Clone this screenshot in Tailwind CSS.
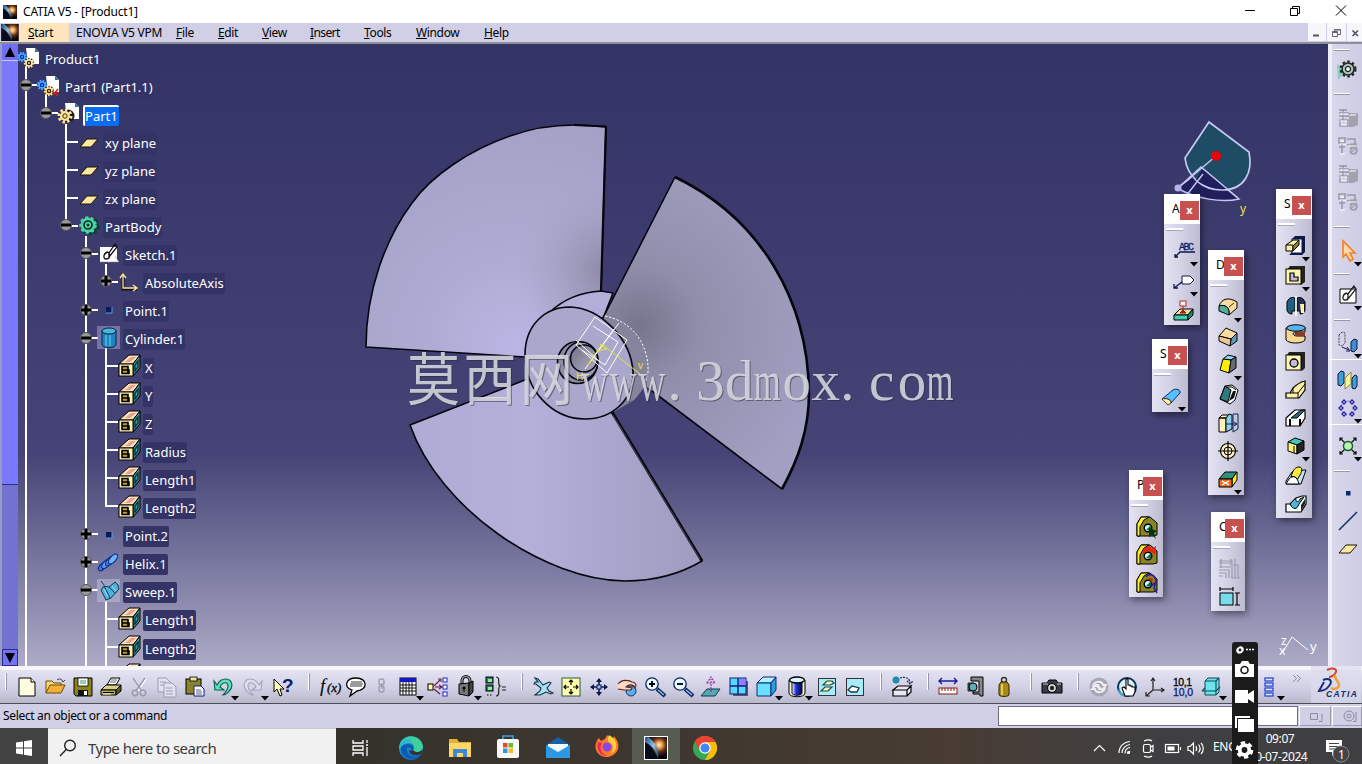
<!DOCTYPE html>
<html lang="en">
<head>
    <meta charset="UTF-8">
    <meta name="viewport" content="width=device-width, initial-scale=1.0">
    <title>CATIA V5 - [Product1]</title>
    <script src="https://cdn.jsdelivr.net/npm/@tailwindcss/browser@4"></script>
</head>
<body class="w-[1362px] h-[764px] overflow-hidden flex flex-col bg-[#d0cfe6] text-black font-['Noto_Sans','Open_Sans',sans-serif]">

    <!-- Icon library, every symbol is centred on 0,0 -->
    <svg class="absolute w-0 h-0">
        <defs>
            <radialGradient id="nebula" gradientUnits="userSpaceOnUse" cx="4" cy="-4" r="15">
                <stop offset="0" stop-color="#fff3d8"/><stop offset="0.25" stop-color="#f0a050"/><stop offset="0.6" stop-color="#5a2a14"/><stop offset="1" stop-color="#05060c"/>
            </radialGradient>
            <linearGradient id="streak" x1="0" y1="0" x2="1" y2="1">
                <stop offset="0" stop-color="#1c4a78"/><stop offset="0.5" stop-color="#8fc4e8"/><stop offset="1" stop-color="#10283c"/>
            </linearGradient>
            <linearGradient id="edgeG" x1="0" y1="0" x2="1" y2="1">
                <stop offset="0" stop-color="#1fb6e8"/><stop offset="0.5" stop-color="#1b7fd0"/><stop offset="1" stop-color="#0b58a8"/>
            </linearGradient>
            <linearGradient id="cyl" x1="0" x2="1"><stop offset="0" stop-color="#fff"/><stop offset="0.4" stop-color="#2233dd"/><stop offset="1" stop-color="#04043a"/></linearGradient>
        </defs>
        <symbol id="app" viewBox="-14 -14 28 28"><rect x="-14" y="-14" width="28" height="28" fill="#05060c"/><rect x="-14" y="-14" width="28" height="28" fill="url(#nebula)"/><path d="M-14 -14H-9C-3 -8 1 -3 3 4C4 8 3 12 2 14C0 4 -4 -3 -14 -7z" fill="url(#streak)"/><path d="M-14 -7C-6 -3 -1 4 0 14H-14z" fill="#060c1c"/></symbol>
        <!-- tree icons -->
        <symbol id="gearS" viewBox="-6 -6 12 12"><circle r="4" fill="none" stroke="currentColor" stroke-width="2.4" stroke-dasharray="1.6 1.1"/><circle r="3" fill="none" stroke="currentColor" stroke-width="1.6"/><circle r="1" fill="currentColor"/></symbol>
        <symbol id="product" viewBox="-14 -14 28 28"><path d="M-3 -11H6L10 -7V5H-1z" fill="#fff"/><path d="M6 -11L10 -7H6z" fill="#2a7898"/><circle cx="-7" cy="-2" r="5" fill="#0c2c90"/><use href="#gearS" x="-13" y="-8" width="12" height="12" color="#4aa6ff"/><circle cx="0" cy="4" r="5" fill="#221a10"/><use href="#gearS" x="-6" y="-2" width="12" height="12" color="#ffe9b0"/></symbol>
        <symbol id="part" viewBox="-14 -14 28 28"><path d="M-3 -11H6L10 -7V5H-1z" fill="#fff"/><path d="M6 -11L10 -7H6z" fill="#2a7898"/><circle cx="-7" cy="-2" r="5" fill="#0c2c90"/><use href="#gearS" x="-13" y="-8" width="12" height="12" color="#4aa6ff"/><circle cx="0" cy="4" r="5" fill="#221a10"/><use href="#gearS" x="-6" y="-2" width="12" height="12" color="#ffe08a"/><path d="M3 4L9 9M9 2L4 8M7 6H10" stroke="#c82018" stroke-width="1.4"/></symbol>
        <symbol id="part2" viewBox="-14 -14 28 28"><path d="M-4 -12H6L10 -8V4H-2z" fill="#fff"/><path d="M6 -12L10 -8H6z" fill="#2a7898"/><circle cx="-1" cy="1" r="6.5" fill="#1c1814"/><circle cx="-4" cy="1" r="6" fill="none" stroke="#ffe59a" stroke-width="3" stroke-dasharray="2.4 2.2"/><circle cx="-4" cy="1" r="5" fill="#ffe59a"/><circle cx="-4" cy="1" r="2.2" fill="none" stroke="#3a2c08"/></symbol>
        <symbol id="plane" viewBox="-14 -14 28 28"><path d="M-9 4L-2 -4H9L2 4z" fill="#ffe9a0" stroke="#181408" stroke-width="1"/></symbol>
        <symbol id="body" viewBox="-14 -14 28 28"><circle cx="1" cy="-2" r="8" fill="#0b3d38" stroke="#0b3d38" stroke-width="3" stroke-dasharray="3 2.4"/><circle cx="-1" cy="-3" r="7.500" fill="#4fd0a0" stroke="#4fd0a0" stroke-width="2.6" stroke-dasharray="3 2.4"/><circle cx="-1" cy="-3" r="4" fill="none" stroke="#06302a" stroke-width="1.6"/><circle cx="-1" cy="-3" r="1.5" fill="#06302a"/></symbol>
        <symbol id="sketch" viewBox="-14 -14 28 28"><path d="M-9 -9H8V6H-9z" fill="#fff"/><path d="M-9 6H10L6 0" fill="#fff" stroke="#888" stroke-width=".6"/><path d="M-1 -4C-6 -3 -6 3 -3 3C1 3 2 -1 -1 -4M6 -12L0 -3V1L8 -9z" fill="none" stroke="#111" stroke-width="1.3"/></symbol>
        <symbol id="axis" viewBox="-14 -14 28 28"><path d="M-6 -9V5H8" fill="none" stroke="#111" stroke-width="3"/><path d="M-6 -10V4H8M-9 -6L-6 -10L-3 -6M4 1L8 4L4 7" fill="none" stroke="#ffe9a0" stroke-width="1.3"/></symbol>
        <symbol id="point" viewBox="-14 -14 28 28"><rect x="-3" y="-5" width="6" height="6" fill="#0a1a58"/><path d="M-3 1H3V-5" fill="none" stroke="#58a0e8" stroke-width="1"/></symbol>
        <symbol id="cylT" viewBox="-14 -14 28 28"><rect x="-12" y="-14" width="23" height="23" fill="#a9a7dc" opacity=".5"/><path d="M-7 -9V4C-7 9 7 9 7 4V-9z" fill="#1f83c0" stroke="#06283c"/><ellipse cy="-9" rx="7" ry="3" fill="#4ab8dc" stroke="#06283c"/><path d="M-3 -5V6M1 -5V6" stroke="#6fd6f2"/></symbol>
        <symbol id="param" viewBox="-14 -14 28 28"><path d="M-10 -4L0 -13H11L4 -4z" fill="#fbe0b8" stroke="#000"/><path d="M-4 -6L2 -11H7L1 -6z" fill="#e8a090"/><path d="M4 -4L11 -13V0L4 8z" fill="#3e8f96" stroke="#000"/><path d="M6 -3L9 -7V-1L6 3z" fill="none" stroke="#0a2a30" stroke-width="1.2"/><rect x="-10" y="-4" width="14" height="12" fill="#fff2b8" stroke="#000"/><path d="M-7 -1.500H-1V5.500H-7zM-7 2H0V5.500H-2" fill="#b89a48" stroke="#000" stroke-width="1.600"/></symbol>
        <symbol id="helix" viewBox="-14 -14 28 28"><g fill="#3a7ae8" stroke="#0c2a80" stroke-width="1.1"><ellipse cx="-7" cy="2" rx="2.600" ry="4.500" transform="rotate(40 -7 2)"/><ellipse cx="-3" cy="-1" rx="3" ry="5.500" transform="rotate(40 -3 -1)" fill="#5a9cf4"/><ellipse cx="1" cy="-4" rx="3" ry="6" transform="rotate(40 1 -4)"/><ellipse cx="4" cy="-6" rx="3" ry="6" transform="rotate(40 4 -6)" fill="#6fb2ff"/></g></symbol>
        <symbol id="sweep" viewBox="-14 -14 28 28"><rect x="-12" y="-14" width="23" height="23" fill="#b9b7d4" opacity=".6"/><path d="M-8 -3L-5 -7L0 -6L6 -11L9 -8L10 -4L2 5L-3 7z" fill="#4fb0dc" stroke="#0c3c58"/><path d="M-5 -7L1 5M0 -6L6 0M-8 -12L-5 -8" stroke="#0c3c58"/><path d="M-5 -4L-1 4M3 -7L7 -2" stroke="#a8e2f6"/></symbol>
        <!-- standard toolbar -->
        <symbol id="new" viewBox="-14 -14 28 28"><path d="M-8 -9H4L8 -5V9H-8z" fill="#fffde0" stroke="#000"/><path d="M4 -9V-5H8" fill="#fff" stroke="#000"/></symbol>
        <symbol id="open" viewBox="-14 -14 28 28"><path d="M-9 6V-6H-3L-1 -4H6V-1" fill="#ffd873" stroke="#6a4a08"/><path d="M-9 6L-5 -2H10L6 6z" fill="#f2b136" stroke="#6a4a08"/><path d="M2 -7C4 -9 7 -8 8 -5L10 -7" fill="none" stroke="#333"/></symbol>
        <symbol id="save" viewBox="-14 -14 28 28"><path d="M-9 -9H9V9H-7L-9 7z" fill="#8a8420" stroke="#000"/><rect x="-5" y="-9" width="10" height="8" fill="#fff" stroke="#000" stroke-width=".8"/><path d="M-3 -6H3M-3 -4H3" stroke="#3c9a6c"/><rect x="-5" y="3" width="10" height="6" fill="#111"/><rect x="1" y="4" width="3" height="4" fill="#fff"/></symbol>
        <symbol id="print" viewBox="-14 -14 28 28"><path d="M-4 -2L0 -9H9L5 -2z" fill="#fff" stroke="#000"/><path d="M-1 -5H5M0 -7H6" stroke="#333" stroke-width=".7"/><path d="M-10 3L-5 -2H10L5 3z" fill="#d9d18a" stroke="#000"/><path d="M-10 3H5V8H-10z" fill="#b8b060" stroke="#000"/><path d="M5 3L10 -2V4L5 8z" fill="#5c5820" stroke="#000"/><path d="M-8 5.500H3" stroke="#000"/><path d="M-8 7H0" stroke="#ffffa0"/></symbol>
        <symbol id="cut" viewBox="-14 -14 28 28"><g fill="none" stroke="#fff" stroke-width="1.6" transform="translate(1 1)"><path d="M-6 -9L3 4M6 -9L-3 4"/></g><g fill="none" stroke="#9c9ab0" stroke-width="1.5"><path d="M-6 -9L3 4M6 -9L-3 4"/><circle cx="-4" cy="6" r="2.7"/><circle cx="4" cy="6" r="2.7"/></g></symbol>
        <symbol id="copy" viewBox="-14 -14 28 28"><g fill="#e2e1f0" stroke="#9c9ab0"><path d="M-9 -9H-1L3 -5V5H-9z"/><path d="M-3 -4H5L9 0V10H-3z"/><path d="M-7 -5H-1M-7 -2H-4M-1 1H5M-1 4H6M-1 7H6"/></g></symbol>
        <symbol id="paste" viewBox="-14 -14 28 28"><rect x="-9" y="-8" width="15" height="15" fill="#8a8430" stroke="#000"/><rect x="-5" y="-10" width="7" height="4" fill="#e8e4a0" stroke="#000" stroke-width=".8"/><path d="M-1 -1H6L9 2V9H-1z" fill="#fff" stroke="#10206a"/><path d="M1 3H6M1 5H7M1 7H7" stroke="#10206a" stroke-width=".7"/></symbol>
        <symbol id="undo" viewBox="-14 -14 28 28"><path d="M-9 -6L-8 3H1L-3 0C-1 -5 5 -6 5 -1C5 3 3 5 0 8C3 8 9 3 9 -2C8 -10 -2 -10 -6 -2z" fill="#5fe0b8" stroke="#0a5a50" stroke-width="1.1"/></symbol>
        <symbol id="redo" viewBox="-14 -14 28 28"><path d="M9 -6L8 3H-1L3 0C1 -5 -5 -6 -5 -1C-5 3 -3 5 0 8C-3 8 -9 3 -9 -2C-8 -10 2 -10 6 -2z" fill="#dddcec" stroke="#a4a2b8" stroke-width="1.1"/></symbol>
        <symbol id="help" viewBox="-14 -14 28 28"><path d="M-9 -8V5L-6 2L-3 9L-1 8L-3 2H1z" fill="#ffffb8" stroke="#000"/><text x="-1" y="5" font-size="19" font-weight="bold" fill="#0c1c6c" font-family="Liberation Sans">?</text></symbol>
        <symbol id="fx" viewBox="-14 -14 28 28"><text x="-10" y="5" font-size="19" font-style="italic" font-family="Liberation Serif">f</text><text x="-3" y="5" font-size="13" font-style="italic" font-family="Liberation Serif" stroke="#000" stroke-width=".3">(x)</text></symbol>
        <symbol id="bubble" viewBox="-14 -14 28 28"><path d="M0 -9C12 -9 12 3 1 4L-6 9L-4 3C-13 0 -10 -9 0 -9z" fill="#fff" stroke="#000" stroke-width="1.3"/><path d="M-5 -5H6M-6 -3H7M-6 -1H6" stroke="#222" stroke-width=".9"/></symbol>
        <symbol id="chain" viewBox="-14 -14 28 28"><g fill="none" stroke="#a09eb4" stroke-width="1.4"><rect x="-3" y="-8" width="5" height="6" rx="2"/><rect x="-3" y="-1" width="5" height="6" rx="2"/><path d="M0 -4V2"/></g></symbol>
        <symbol id="table" viewBox="-14 -14 28 28"><rect x="-8" y="-9" width="16" height="17" fill="#fff" stroke="#000"/><rect x="-8" y="-9" width="16" height="4" fill="#1418c0"/><path d="M-5 -5V8M-2 -5V8M1 -5V8M4 -5V8M-8 -2H8M-8 1H8M-8 4H8" stroke="#000" stroke-width=".9"/></symbol>
        <symbol id="diagram" viewBox="-14 -14 28 28"><rect x="-10" y="-3" width="5" height="6" fill="#ffffa0" stroke="#000"/><path d="M-4 -1L2 -7M-3 0H4M-4 2L2 7M0 -8H3V-5M1 -2L4 0L1 2" fill="none" stroke="#701850" stroke-width="1.1"/><g fill="#fff" stroke="#1c28c8"><rect x="5" y="-9" width="4" height="4"/><rect x="5" y="-2" width="4" height="4"/><rect x="5" y="5" width="4" height="4"/></g></symbol>
        <symbol id="lock" viewBox="-14 -14 28 28"><path d="M-4 -2V-6C-4 -12 4 -12 4 -6V-2" fill="none" stroke="#000" stroke-width="3"/><path d="M-4 -2V-6C-4 -12 4 -12 4 -6V-2" fill="none" stroke="#aaa" stroke-width="1.2"/><path d="M-7 -3L3 -4V9L-7 7z" fill="#777" stroke="#000"/><path d="M3 -4L7 -6V5L3 9z" fill="#444" stroke="#000"/><circle cx="-2" cy="1" r="1.6"/><path d="M-2 1V5" stroke="#000"/></symbol>
        <symbol id="rules" viewBox="-14 -14 28 28"><rect x="-10" y="-10" width="7" height="6" fill="#2f7a80" stroke="#000"/><rect x="-8" y="-8" width="4" height="3" fill="#8ff08a"/><rect x="-10" y="-2" width="7" height="6" fill="#2f7a80" stroke="#000"/><rect x="-8" y="0" width="4" height="3" fill="#8ff08a"/><path d="M-9 8H-3" stroke="#000" stroke-dasharray="1.5 1.5"/><path d="M0 -10C5 -10 1 -2 4 -1C1 0 5 9 0 9M6 0H10M6 3H10" fill="none" stroke="#222" stroke-width="1.2"/></symbol>
        <!-- view toolbar -->
        <symbol id="fly" viewBox="-14 -14 28 28"><path d="M-8 -9L-5 -8L0 -2L6 -5L8 -4L4 1L6 4L10 6L8 7L3 5L-3 8L-8 8L-3 4L-2 1L-7 -3L-9 -3L-8 -5L-5 -5z" fill="#a8e0f0" stroke="#10304a" stroke-width="1.1"/></symbol>
        <symbol id="fit" viewBox="-14 -14 28 28"><rect x="-9" y="-9" width="18" height="18" fill="#ffffb0" stroke="#2a5a3a"/><path d="M0 -7V-2M0 7V2M-7 0H-2M7 0H2M-2 -5L0 -7L2 -5M-2 5L0 7L2 5M-5 -2L-7 0L-5 2M5 -2L7 0L5 2" fill="none" stroke="#000" stroke-width="1.2"/></symbol>
        <symbol id="pan" viewBox="-14 -14 28 28"><path d="M0 -8V8M-8 0H8" stroke="#0a1a50" stroke-width="1.600"/><path d="M-3 -5L0 -9L3 -5zM-3 5L0 9L3 5zM-5 -3L-9 0L-5 3zM5 -3L9 0L5 3z" fill="#0a1a50"/><rect x="-2" y="-2" width="4" height="4" fill="#9cc4f0" stroke="#0a1a50"/></symbol>
        <symbol id="rotate" viewBox="-14 -14 28 28"><circle cx="4" cy="4" r="5" fill="#58b0f0" stroke="#10306a"/><path d="M-9 -3C-5 -8 2 -7 5 -5C9 -5 10 -1 8 1L7 -1C4 -3 1 -2 -1 0L5 1L4 3H-3L-9 2" fill="#fbd8c8" stroke="#5a2418" stroke-width="1.1"/></symbol>
        <symbol id="zin" viewBox="-14 -14 28 28"><path d="M2 2L10 9" stroke="#10205a" stroke-width="4"/><path d="M3 3L9 8" stroke="#7ac8f0" stroke-width="1.6"/><circle cx="-3" cy="-3" r="6.2" fill="#e8fbff" stroke="#10205a" stroke-width="1.3"/><path d="M-6 -3H0M-3 -6V0" stroke="#000" stroke-width="1.8"/></symbol>
        <symbol id="zout" viewBox="-14 -14 28 28"><path d="M2 2L10 9" stroke="#10205a" stroke-width="4"/><path d="M3 3L9 8" stroke="#7ac8f0" stroke-width="1.6"/><circle cx="-3" cy="-3" r="6.2" fill="#e8fbff" stroke="#10205a" stroke-width="1.3"/><path d="M-6 -3H0" stroke="#000" stroke-width="1.8"/></symbol>
        <symbol id="normal" viewBox="-14 -14 28 28"><path d="M-10 9L-4 2H9L4 9z" fill="#58a8b4" stroke="#0c3a44"/><path d="M0 5V-8M-4 -4L0 -10L4 -4z" fill="none" stroke="#8a2a9a" stroke-width="1.1" stroke-dasharray="2 1"/></symbol>
        <symbol id="multi" viewBox="-14 -14 28 28"><rect x="-6" y="-6" width="15" height="15" fill="#555577"/><rect x="-9" y="-9" width="16" height="16" fill="#58d8ff" stroke="#0c1c78"/><rect x="0" y="-8" width="6.500" height="7" fill="#9a78ff"/><path d="M-1 -9V7M-9 -1H7" stroke="#0c1c78" stroke-width="1.4"/></symbol>
        <symbol id="cube" viewBox="-14 -14 28 28"><path d="M-10 -4L-4 -10H9L4 -4z" fill="#b4f2ff" stroke="#0c2878"/><path d="M-10 -4H4V9H-10z" fill="#6ae0ff" stroke="#0c2878"/><path d="M4 -4L9 -10V3L4 9z" fill="#2f9fdc" stroke="#0c2878"/></symbol>
        <symbol id="shade" viewBox="-14 -14 28 28"><path d="M-8 -7V6C-8 11 8 11 8 6V-7z" fill="#f6f6c8" stroke="#000"/><path d="M-5 -5V6C-5 9 5 9 5 6V-5z" fill="url(#cyl)" stroke="#04043a"/><ellipse cy="-7" rx="7.5" ry="3" fill="#d8f4ff" stroke="#000" stroke-width="1.3"/></symbol>
        <symbol id="hide" viewBox="-14 -14 28 28"><rect x="-8.500" y="-8.500" width="17" height="17" fill="#a8ecfa" stroke="#333"/><path d="M-6 4L-2 0H5L1 4zM-4 -2L0 -6H5L7 -4L3 -2z" fill="#fff2b8" stroke="#1a4a4a" stroke-width="1.2"/></symbol>
        <symbol id="swap" viewBox="-14 -14 28 28"><rect x="-8.500" y="-8.500" width="17" height="17" fill="#a8ecfa" stroke="#333"/><path d="M-7 3L-3 -1L4 1L2 5H-4z" fill="#fff" stroke="#1a3a4a" stroke-width="1.3"/></symbol>
        <symbol id="catalog" viewBox="-14 -14 28 28"><circle cx="-6" cy="-7" r="3.500" fill="#1f8bb0"/><path d="M-2 -9C4 -11 8 -8 8 -4M5 -6L8 -3L11 -6" fill="none" stroke="#10205a" stroke-width="1.2" stroke-dasharray="2 1"/><path d="M-9 3L-4 -1H9L5 3zM-9 3H5V9H-9zM5 3L9 -1V5L5 9" fill="#e8e8f4" stroke="#000" stroke-width="1.2"/></symbol>
        <symbol id="measure" viewBox="-14 -14 28 28"><path d="M-9 -6H9M-6 -9L-9 -6L-6 -3M6 -9L9 -6L6 -3" fill="none" stroke="#141ca0" stroke-width="1.4"/><rect x="-9" y="1" width="18" height="6" fill="#fff" stroke="#8a1a10"/><path d="M-6 1V4M-3 1V4M0 1V4M3 1V4M6 1V4" stroke="#8a1a10"/></symbol>
        <symbol id="caliper" viewBox="-14 -14 28 28"><path d="M-5 -10H7V9H4V7H-3V5H3V-6H-5z" fill="#888" stroke="#000"/><path d="M-8 -4H-2V4H-8z" fill="#666" stroke="#000" stroke-width=".8"/><circle cx="-3" cy="0" r="4" fill="#5ab0b8" stroke="#000"/></symbol>
        <symbol id="weight" viewBox="-14 -14 28 28"><circle cy="-7" r="2.500" fill="none" stroke="#333" stroke-width="1.4"/><path d="M-3 -5H3L5 -2V8C3 10 -3 10 -5 8V-2z" fill="#a88a1c" stroke="#2c2404"/><path d="M-2 -3V8" stroke="#f0dc70" stroke-width="1.6"/></symbol>
        <symbol id="camera" viewBox="-14 -14 28 28"><path d="M-10 -4H-5L-3 -7H4L6 -4H10V6H-10z" fill="#3a3a48" stroke="#000"/><path d="M-9 -3H-4M5 -3H9" stroke="#ccc"/><circle cy="1" r="4.400" fill="#ddd" stroke="#000"/><circle cy="1" r="2.200" fill="#222"/></symbol>
        <symbol id="update" viewBox="-14 -14 28 28"><circle r="9.500" fill="#a9a7b4"/><path d="M-6 0C-6 -6 3 -7 4 -2H7L3 3L-2 -2H0M6 0C6 6 -3 7 -4 2H-7L-3 -2L1 2H-1" fill="none" stroke="#eeedf6" stroke-width="1.800"/></symbol>
        <symbol id="manual" viewBox="-14 -14 28 28"><circle r="9" fill="#d8eef8" stroke="#0c3050" stroke-width="2"/><path d="M-9 3C-6 8 -3 9 0 9" fill="none" stroke="#3ab0d8" stroke-width="1.500"/><path d="M-2 9L-5 1L-3 0L-1 2V-8H1V-2H3V-1H5V0H8V5L6 9z" fill="#fff" stroke="#000" stroke-width="1.100"/></symbol>
        <symbol id="axsys" viewBox="-14 -14 28 28"><path d="M-2 -9V3H9M-2 3L-9 9M-4 -6L-2 -9L0 -6M6 1L9 3L6 5M-9 5V9H-5" fill="none" stroke="#222" stroke-width="1.200"/></symbol>
        <symbol id="dims" viewBox="-14 -14 28 28"><g font-size="10.500" font-family="Liberation Sans" stroke-width=".3"><text x="-10" y="-1" textLength="19" stroke="#000">10,1</text><text x="-10" y="9" textLength="20" fill="#0c1c78" stroke="#0c1c78">10,0</text></g></symbol>
        <symbol id="box" viewBox="-14 -14 28 28"><path d="M-6 -6L-3 -9H8V5L5 8H-6z" fill="#6fe4ec" stroke="#0c4a58"/><path d="M-6 -6H5V8M5 -6L8 -9M-9 4H5L9 0M-9 4L-6 1" fill="none" stroke="#0c4a58" stroke-width="1.100"/></symbol>
        <symbol id="stack" viewBox="-14 -14 28 28"><g fill="#e4e8ff" stroke="#1c3ccc" stroke-width="1.200"><rect x="-4" y="-9" width="8" height="3"/><rect x="-4" y="-4" width="8" height="3"/><rect x="-4" y="1" width="8" height="3"/><rect x="-4" y="6" width="8" height="3"/></g></symbol>
        <!-- floating toolbars -->
        <symbol id="abc" viewBox="-14 -14 28 28"><text x="-5" y="-1" font-size="10" fill="#0c1c6c" textLength="15" font-family="Liberation Mono" stroke="#0c1c6c" stroke-width=".3">ABC</text><path d="M11 1H-4L-9 6M-9 3V6H-6" fill="none" stroke="#0c1440" stroke-width="1.300"/></symbol>
        <symbol id="tag" viewBox="-14 -14 28 28"><path d="M-2 -5H6L10 -1L6 3H-2z" fill="#fff" stroke="#101850"/><path d="M-2 1L-10 7M-10 3V7H-6" fill="none" stroke="#101850" stroke-width="1.300"/></symbol>
        <symbol id="stamp" viewBox="-14 -14 28 28"><path d="M-10 4L-4 -2H9L4 4z" fill="#f8dc9c" stroke="#000"/><path d="M-10 4H4V9H-10z" fill="#3ed0b0" stroke="#000"/><path d="M4 4L9 -2V4L4 9z" fill="#1c8a80" stroke="#000"/><path d="M-1 -5V0M-4 2L-1 -1L2 2z" fill="#a02018" stroke="#a02018"/><rect x="-4" y="-10" width="6" height="5" fill="#fff" stroke="#c02018"/></symbol>
        <symbol id="surf" viewBox="-14 -14 28 28"><path d="M-10 3L1 -6C4 -8 9 -6 8 -3L-1 7C-1 3 -6 2 -10 3z" fill="#58c0ff" stroke="#0c2878"/><path d="M-10 3C-6 2 -1 3 -1 7L-4 9C-6 6 -8 6 -10 3z" fill="#fff0b8" stroke="#4a3a10"/></symbol>
        <symbol id="fillet" viewBox="-14 -14 28 28"><path d="M-9 -1C-6 -9 1 -10 9 -5V1L1 8C2 0 -4 -3 -9 -1z" fill="#f8dca0" stroke="#000"/><path d="M-9 -1C-3 -3 2 0 1 8L-9 4z" fill="#4fae9a" stroke="#000"/><path d="M1 0L6 -4" stroke="#000" stroke-width=".8"/></symbol>
        <symbol id="chamfer" viewBox="-14 -14 28 28"><path d="M-9 -1L-2 -9L9 -4L3 2z" fill="#f8dca0" stroke="#000"/><path d="M3 2L9 -4V4L2 9z" fill="#5a9cc0" stroke="#000"/><path d="M-9 -1L3 2L2 9L-9 4z" fill="#e8c890" stroke="#000"/></symbol>
        <symbol id="draft" viewBox="-14 -14 28 28"><path d="M-5 -6L0 -10L8 -8L3 -5z" fill="#80d8f4" stroke="#000"/><path d="M-5 -6L3 -5L1 8L-8 5z" fill="#fff000" stroke="#000"/><path d="M3 -5L8 -8V3L1 8z" fill="#6a6a70" stroke="#000"/></symbol>
        <symbol id="shell" viewBox="-14 -14 28 28"><path d="M-8 4L-3 -9L4 -10L10 -5L7 5L2 9z" fill="#fff" stroke="#000"/><path d="M-8 4L-3 -9L3 -5L0 7z" fill="#2f7a7a" stroke="#000"/><path d="M1 6L5 -4L8 -4L6 3z" fill="#111"/><path d="M-2 -8L4 -8L8 -5" fill="none" stroke="#000"/></symbol>
        <symbol id="thick" viewBox="-14 -14 28 28"><path d="M-9 -5L-6 -8H1L-2 -5zM-9 -5H-2V9H-9z" fill="#fff2b8" stroke="#000"/><path d="M-2 -5L1 -9L4 -8V6L-2 9z" fill="#8cd0e8" stroke="#000"/><path d="M5 -9H10V6L5 9zM-2 1H8M6 -1L9 1L6 3" fill="none" stroke="#0c2458"/></symbol>
        <symbol id="target" viewBox="-14 -14 28 28"><circle r="7.500" fill="#ffeec0" stroke="#000" stroke-width="1.200"/><circle r="4" fill="none" stroke="#000"/><path d="M0 -10V10M-10 0H10" stroke="#000" stroke-width="1.200"/></symbol>
        <symbol id="remove" viewBox="-14 -14 28 28"><path d="M-9 0L-3 -7H9L4 0z" fill="#2f9080" stroke="#000"/><path d="M4 0L9 -7V1L4 8z" fill="#ffee20" stroke="#000"/><path d="M-9 0H4V8H-9z" fill="#f26a20" stroke="#000"/><path d="M-6 2L1 6M1 2L-6 6" stroke="#fff" stroke-width="1.400"/></symbol>
        <symbol id="pad" viewBox="-14 -14 28 28"><path d="M-4 -7L-1 -10H9V6L6 9H-7L-4 6z" fill="#101848"/><rect x="-4" y="-7" width="10" height="14" fill="#fff" stroke="#101848"/><path d="M-10 -1L-3 -6H3L-3 0z" fill="#f8f0a0" stroke="#000"/><path d="M-10 -1H-3V5H-10z" fill="#f8f0a0" stroke="#000"/><path d="M-3 0L3 -6V-1L-3 5z" fill="#888030" stroke="#000"/></symbol>
        <symbol id="pocket" viewBox="-14 -14 28 28"><path d="M-9 -6L-6 -10H9V6L5 9z" fill="#222"/><rect x="-10" y="-7" width="15" height="15" fill="#fff6b0" stroke="#000"/><path d="M-6 -3H-2V1H2V5H-6z" fill="#c0bcd8" stroke="#000" stroke-width="1.200"/></symbol>
        <symbol id="shaft" viewBox="-14 -14 28 28"><path d="M-9 -4C-7 -9 -3 -9 -1 -8V5H-4V8C-7 8 -9 6 -9 4z" fill="#1f5f80" stroke="#000"/><path d="M9 -4C7 -9 3 -9 1 -8V5H4V8C7 8 9 6 9 4z" fill="#26304a" stroke="#000"/><path d="M4 -2H8V7H5z" fill="#fff2b0"/><path d="M0 -10V10" stroke="#fff" stroke-width="1.500"/></symbol>
        <symbol id="groove" viewBox="-14 -14 28 28"><path d="M-10 -6V6C-7 10 6 10 9 6V2H1C-4 2 -4 -2 0 -2H9V-6z" fill="#f8d890" stroke="#000"/><ellipse cy="-6" rx="9.500" ry="3.200" fill="#58b4f0" stroke="#000"/><path d="M9 -2V2H0C-2 1 -2 -1 0 -2z" fill="#883c28"/></symbol>
        <symbol id="hole" viewBox="-14 -14 28 28"><path d="M-9 -7L-7 -10H9V6L6 9z" fill="#222"/><rect x="-10" y="-7" width="15" height="15" fill="#fff6b0" stroke="#000"/><circle cx="-2" cy="1" r="4" fill="#c0bcd8" stroke="#000" stroke-width="1.300"/></symbol>
        <symbol id="rib" viewBox="-14 -14 28 28"><path d="M-10 3H-6L-3 -2C1 -6 5 -8 9 -9V0L3 8H-10z" fill="#fff2a8" stroke="#000" stroke-width="1.200"/><path d="M-6 3H2L9 -6M-3 -2V3M2 3V8" fill="none" stroke="#000"/></symbol>
        <symbol id="slot" viewBox="-14 -14 28 28"><path d="M-10 0L-1 -8H9V0L4 8H-10z" fill="#fff" stroke="#000" stroke-width="1.200"/><path d="M-5 0L5 -8H9L1 0z" fill="#2a6a78" stroke="#000"/><path d="M-6 1V8M4 1V8" stroke="#000" stroke-width="2"/></symbol>
        <symbol id="stiff" viewBox="-14 -14 28 28"><path d="M-8 -4L-1 -8L8 -5L1 -1z" fill="#3fc8c0" stroke="#000"/><path d="M-8 -4L1 -1V8L-8 5z" fill="#fff080" stroke="#000"/><path d="M1 -1L8 -5V4L1 8z" fill="#222" stroke="#000"/><path d="M-2 0V7" stroke="#000"/></symbol>
        <symbol id="loft" viewBox="-14 -14 28 28"><path d="M-10 5L-4 -4L8 -6H10L5 8H-10z" fill="#bfe6f4" stroke="#000"/><path d="M-5 1C-3 -7 0 -9 3 -9C7 -9 6 -4 4 -1L1 4C0 0 -2 0 -5 1z" fill="#ffe840" stroke="#000"/><path d="M-10 8L-7 3C-3 -1 1 0 3 8z" fill="#fff" stroke="#000"/></symbol>
        <symbol id="rloft" viewBox="-14 -14 28 28"><path d="M-10 0H-6L0 -6L6 -8H10V0L5 8H-10z" fill="#fff" stroke="#000" stroke-width="1.200"/><path d="M-6 0C-3 6 1 6 3 0L8 -7L4 -5C2 0 -1 -3 0 -6z" fill="#48b8d8" stroke="#000"/><path d="M5 1L9 -5V0L5 7z" fill="#222"/></symbol>
        <symbol id="housing" viewBox="-14 -14 28 28"><path d="M-10 -3L-6 -10H3L10 -4V8L6 9H-10z" fill="#8a8428" stroke="#000"/><path d="M-10 -3L-6 -10H2L-3 -7L-7 0V9H-10z" fill="#ffee30" stroke="#000"/><circle cx="1" cy="1" r="3.800" fill="#cff" stroke="#000" stroke-width="1.400"/><path d="M-1 3L4 -2V4z" fill="#1c6a40"/></symbol>
        <symbol id="p1" viewBox="-14 -14 28 28"><use href="#housing" x="-14" y="-14" width="28" height="28"/><path d="M2 1L10 4L7 6L9 12L5 8L2 10z" fill="#031"/></symbol>
        <symbol id="p2" viewBox="-14 -14 28 28"><use href="#housing" x="-14" y="-14" width="28" height="28"/><path d="M-5 -3L-1 -8L2 -9L5 -6L9 -9L8 0L4 -3C1 -5 -2 -4 -4 0z" fill="#f02010"/></symbol>
        <symbol id="p3" viewBox="-14 -14 28 28"><use href="#housing" x="-14" y="-14" width="28" height="28"/><path d="M-1 -6C1 -10 9 -9 9 -1L7 5L10 10M9 -1L3 4" fill="none" stroke="#2420a0" stroke-width="1.600"/><path d="M1 -6L6 -4L5 0z" fill="#e02010"/></symbol>
        <symbol id="consG" viewBox="-14 -14 28 28"><path d="M-10 -8H4M-10 -6H4M-8 -10V-1M2 -10V-4H10M6 -10V9M-10 1H0V9M-10 4H-3V9M-10 7H-6M3 -1V9H11M9 -4V9M-10 -2H4" fill="none" stroke="#9c9ab0" stroke-width="1.200"/></symbol>
        <symbol id="cons" viewBox="-14 -14 28 28"><rect x="-9" y="-4" width="13" height="12" fill="#78dcec" stroke="#000"/><path d="M-9 -10V-6M4 -10V-6M-9 -8H4M8 -4V8M6 -4H11M6 8H11" stroke="#000" stroke-width="1.200"/></symbol>
        <!-- right toolbar -->
        <symbol id="cog" viewBox="-14 -14 28 28"><path d="M-11 -5L-2 2L-10 11z" fill="#8ad0bc"/><circle r="6" fill="#b8c4c0" stroke="#1a2420" stroke-width="1.500"/><circle r="7.500" fill="none" stroke="#1a2420" stroke-width="2" stroke-dasharray="2.600 2.300"/><circle r="2.600" fill="#e8eeee" stroke="#1a2420" stroke-width="1.200"/></symbol>
        <symbol id="gray1" viewBox="-14 -14 28 28"><path d="M1 -2L10 -5V7L5 9H1z" fill="#a3a1ae"/><path d="M-9 -5H1M-9 -2H1M-5 -9V4M-8 2H0V8H-8zM1 -4H8M-9 -8L-1 -8" fill="none" stroke="#9896a6" stroke-width="1.300"/><path d="M-8 -4H0M-8 3H-1M2 -3H8M-7 7H-1" stroke="#fff"/></symbol>
        <symbol id="gray2" viewBox="-14 -14 28 28"><path d="M2 -3H9V4L5 6H2z" fill="#b3b1c0"/><path d="M-9 -8H-3V-3H-9zM-9 1H-3M-6 -3V7M-1 -7H7V-1H-1M2 3C4 0 10 1 9 5C8 9 3 9 2 5" fill="none" stroke="#9896a6" stroke-width="1.500"/><path d="M-8 -2H-2M0 0H8M-8 8H-3M-8 -5H-4" stroke="#fff"/></symbol>
        <symbol id="arrow" viewBox="-14 -14 28 28"><path d="M-5 -10V6L-2 3L2 10L5 8L2 2H7z" fill="#ffd8b0" stroke="#f08020" stroke-width="1.600"/></symbol>
        <symbol id="sketcher" viewBox="-14 -14 28 28"><path d="M-8 -6H8V8H-8z" fill="#fff" stroke="#000"/><path d="M-1 -2C-6 -1 -6 5 -3 5C1 5 1 1 -1 -2M6 -9L0 -1V4L8 -6z" fill="none" stroke="#222" stroke-width="1.300"/></symbol>
        <symbol id="trans" viewBox="-14 -14 28 28"><path d="M-9 -8L-6 -11L-3 -10V0L-6 3L-9 2z" fill="none" stroke="#444" stroke-dasharray="2 1"/><path d="M-6 4L1 7M-1 4L2 8L-2 8" fill="none" stroke="#101850"/><path d="M3 -1L6 -4L9 -3V6L6 9L3 8z" fill="#3f8fd0" stroke="#101840"/></symbol>
        <symbol id="mirror" viewBox="-14 -14 28 28"><path d="M-10 -6L-7 -9L-4 -8V3L-7 6L-10 5z" fill="#3f9fd8" stroke="#101840"/><path d="M-3 -2L3 -8V4L-3 9z" fill="#f8f49c" stroke="#8a8430"/><path d="M4 -2L7 -5L9 -4V6L7 9L4 8z" fill="#3f9fd8" stroke="#101840"/></symbol>
        <symbol id="pattern" viewBox="-14 -14 28 28"><circle r="7" fill="none" stroke="#6a6ac8" stroke-dasharray="2 2"/><g fill="#dcdcff" stroke="#2424a0" stroke-width="1.300"><path d="M-6 -6l2 -2l2 2l-2 2zM2 -6l2 -2l2 2l-2 2zM-9 0l2 -2l2 2l-2 2zM5 0l2 -2l2 2l-2 2zM-6 6l2 -2l2 2l-2 2zM2 6l2 -2l2 2l-2 2z"/></g></symbol>
        <symbol id="scale" viewBox="-14 -14 28 28"><path d="M-8 -8L8 8M8 -8L-8 8M-8 -5V-8H-5M5 -8H8V-5M-8 5V8H-5M8 5V8H5" fill="none" stroke="#111" stroke-width="1.200"/><circle r="4.500" fill="#b8f4b0" stroke="#0c5a28" stroke-width="1.400"/></symbol>
        <symbol id="dot" viewBox="-14 -14 28 28"><rect x="-2" y="-2" width="4.500" height="4.500" fill="#0c2a68"/></symbol>
        <symbol id="line" viewBox="-14 -14 28 28"><path d="M-9 9L9 -9" stroke="#0c2a58" stroke-width="1.400"/></symbol>
    </svg>

    <!-- Title bar -->
    <div class="h-[23px] shrink-0 bg-white flex items-center pl-[3px] text-[12px]">
        <svg class="w-[14px] h-[14px]"><use href="#app"/></svg>
        <span class="ml-[6px] mt-px tracking-[-0.2px]">CATIA V5 - [Product1]</span>
        <svg class="ml-auto w-[120px] h-[23px]" fill="none" stroke="#000">
            <path d="M3 10.500H13M48.500 8.500H55.500V15.500H48.500zM50.500 8.500V6.500H57.500V13.500H55.500M94 5.500L104 15.500M104 5.500L94 15.500"/>
        </svg>
    </div>

    <!-- Menu bar -->
    <div class="h-[21px] shrink-0 flex items-center text-[12px] tracking-[-0.35px] border-b-2 border-[#8f8f98] bg-[#d0cfe6]">
        <svg class="w-[18px] h-[17px] ml-[1px]" preserveAspectRatio="none"><use href="#app"/></svg>
        <div class="h-full w-[50px] bg-[#ffe4bd] pl-[9px] flex items-center"><u>S</u>tart</div>
        <div class="w-[107px] pl-[7px] whitespace-nowrap tracking-[-0.28px]">ENOVIA V5 VPM</div>
        <div class="w-[42px]"><u>F</u>ile</div>
        <div class="w-[44px]"><u>E</u>dit</div>
        <div class="w-[48px]"><u>V</u>iew</div>
        <div class="w-[54px] tracking-[-0.6px]"><u>I</u>nsert</div>
        <div class="w-[52px]"><u>T</u>ools</div>
        <div class="w-[68px]"><u>W</u>indow</div>
        <div><u>H</u>elp</div>
        <div class="ml-auto flex gap-px h-[19px]">
            <svg class="w-[18px] h-[18px] bg-[#f6f6fb]"><path d="M5 12.500H11" stroke="#555" stroke-width="2"/></svg>
            <svg class="w-[19px] h-[18px] bg-[#f6f6fb]" fill="none" stroke="#667"><path d="M5.500 8.500H10.500V13.500H5.500zM7.500 8V6.500H13.500V11.500H11M5.500 9.500H10.500M7.500 7H13.500"/></svg>
            <svg class="w-[15px] h-[18px] bg-[#f6f6fb]"><path d="M5.500 7.500L11 13M11 7.500L5.500 13" stroke="#556" stroke-width="1.700"/></svg>
        </div>
    </div>

    <!-- Work area -->
    <div class="h-[622px] shrink-0 flex">

        <!-- Tree scrollbar -->
        <div class="w-[18px] shrink-0 flex flex-col border-l-2 border-[#9a9ac8] bg-[#6c6cd2]">
            <div class="h-[17px] bg-[#6f6ff0] border-b border-[#c8c8ff] flex items-center justify-center"><svg class="w-[12px] h-[12px]"><path d="M1 11L6 1L11 11z"/></svg></div>
            <div class="h-[424px] bg-[#7a78ff] border-b border-[#2c2c88]"></div>
            <div class="grow bg-[#7272d0]"></div>
            <div class="h-[17px] bg-[#7472f4] border border-[#2c2c88] flex items-center justify-center"><svg class="w-[12px] h-[12px]"><path d="M1 1L6 11L11 1z"/></svg></div>
        </div>

        <!-- 3D viewport -->
        <div class="relative w-[1310px] shrink-0 overflow-hidden bg-linear-to-b from-[#343365] from-0% via-[#464476] via-66% to-[#adabc6] to-100%">
            <svg class="absolute inset-0 w-[1310px] h-[622px]" viewBox="18 44 1310 622">
                <defs>
                    <radialGradient id="b1" gradientUnits="userSpaceOnUse" cx="515" cy="345" r="230"><stop offset="0" stop-color="#bab6e4"/><stop offset="0.4" stop-color="#aeabd2"/><stop offset="1" stop-color="#a3a1c6"/></radialGradient>
                    <radialGradient id="b1s" gradientUnits="userSpaceOnUse" cx="606" cy="270" r="90"><stop offset="0" stop-color="#8c8aa6"/><stop offset="1" stop-color="#a5a3c4" stop-opacity="0"/></radialGradient>
                    <radialGradient id="b2" gradientUnits="userSpaceOnUse" cx="640" cy="325" r="190"><stop offset="0" stop-color="#76758c"/><stop offset="0.3" stop-color="#8f8eaa"/><stop offset="1" stop-color="#a2a0c2"/></radialGradient>
                    <linearGradient id="b3" x1="0" x2="1"><stop offset="0" stop-color="#aeacd4"/><stop offset="0.4" stop-color="#b3b0da"/><stop offset="1" stop-color="#9e9cbf"/></linearGradient>
                    <linearGradient id="bore" x1="0" x2="1" y2="1"><stop offset="0" stop-color="#6f6e84"/><stop offset="1" stop-color="#b2b0c8"/></linearGradient>
                </defs>
                <!-- propeller -->
                <g stroke="#05050f" stroke-width="1.600" stroke-linejoin="round">
                    <path d="M606 127C575 123 540 125 510 136C470 150 432 175 412 203C386 238 366 290 366 347L525 357L550 312L601 291z" fill="url(#b1)"/>
                    <path d="M606 127C575 123 540 125 510 136C470 150 432 175 412 203C386 238 366 290 366 347L525 357L550 312L601 291z" fill="url(#b1s)" stroke="none"/>
                    <path d="M606 126L601 291M574 125L606 126.500" stroke-width="2.200"/>
                    <path d="M550 312C565 298 582 292 601 291L613 293L604 316L585 345z" fill="#b1aed8"/>
                    <path d="M604 315C632 322 649 345 648 370C648 380 644 390 634 400L612 413L600 400z" fill="#85849c" stroke="none"/>
                    <path d="M675 177L604 316C632 322 648 343 648 367L646 386L782 489C798 460 809 430 809 393C808 300 760 218 675 177z" fill="url(#b2)" stroke="none"/>
                    <path d="M604 316L675 177M652 391L782 489" fill="none"/>
                    <path d="M675 177C760 218 808 300 809 393C809 430 798 460 782 489" fill="none" stroke-width="2.600"/>
                    <path d="M410 425L530 378L612 412L702 561C680 574 655 581 625 581C545 580 440 510 410 425z" fill="url(#b3)"/>
                    <path d="M612 412L702 561" stroke-width="3"/>
                    <path d="M613 415L700 559" stroke="#66657e" stroke-width=".7"/>
                    <path d="M525 355C525 325 545 307 570 307C600 308 631 338 633 372C634 400 612 419 585 419C552 419 525 390 525 355z" fill="#a9a7cc"/>
                    <ellipse cx="577.500" cy="362.500" rx="20" ry="21" fill="#8d8ca6"/>
                    <ellipse cx="581" cy="361" rx="17" ry="19" fill="#9a98b6"/>
                    <ellipse cx="584" cy="358.500" rx="13.500" ry="13.500" fill="url(#bore)"/>
                </g>
                <g fill="none" stroke="#fff" stroke-width="1">
                    <path d="M605 316C635 322 649 347 648 372L645 384" stroke-dasharray="2.500 1.500"/>
                    <path d="M595 317L627 340L607 373L576 345zM593 326L618 342L605 365L582 350M619 323L585 369M614 329L590 362M576 340L600 362"/>
                </g>
                <g fill="none" stroke="#e6e23c" stroke-width="1"><path d="M588 365L602 344L640 374M597 351L606 349M600 344L607 350"/></g>
                <text x="638" y="369" class="text-[10px] fill-[#e6e23c]">v</text>
                <text x="576" y="380" class="text-[10px] fill-[#e6e23c]">H</text>

                <!-- compass -->
                <path d="M1201 168L1239 199C1222 203 1196 199 1177 188L1188 180z" fill="#201f5c" stroke="#c8c6f4" stroke-width="1.500"/>
                <path d="M1209 122L1249 152C1253 172 1245 190 1222 190C1202 190 1187 176 1185 158z" fill="#1d4c64" stroke="#c8c6f4" stroke-width="1.700"/>
                <path d="M1202 169L1228 189C1214 190 1205 186 1196 180z" fill="#201f5c"/>
                <path d="M1178 188L1201 167L1238 198M1186 196L1203 174" fill="none" stroke="#c8c6f4" stroke-width="1.400"/>
                <path d="M1216 156L1178 188" stroke="#c8c6f4" stroke-width="1.500"/>
                <circle cx="1178" cy="188" r="3.500" fill="#b7b4ec"/><circle cx="1216" cy="156" r="5" fill="#e8060a"/>
                <text x="1240" y="213" class="text-[12px] fill-[#e8e448]">y</text>

                <!-- axis triad -->
                <g class="text-[13px] fill-white"><text x="1281" y="645" class="text-[12px]">z</text><text x="1279" y="655" class="text-[12px]">x</text><text x="1310" y="651">y</text></g>
                <path d="M1283 652L1292 637L1308 650" fill="none" stroke="#fff"/>

                <!-- watermark -->
                <g id="watermark" class="text-[57px] fill-[#dcdee4]/85 font-['Liberation_Serif','Noto_Sans_CJK_SC',serif] drop-shadow-[1.500px_1.500px_0_rgba(40,40,60,0.6)]"></g>

                <!-- tree branches -->
                <g fill="none" stroke="#fff" stroke-width="2">
                    <path d="M26 66V666M46 92V108M66 124V221M86 236V666M106 264V280M106 348V507M106 601V666"/>
                    <path d="M31 85H38M51 113H58M66 142H78M66 170H78M66 198H78M71 226H78M91 254H98M111 282H118M91 310H98M91 338H98M105 366H118M105 394H118M105 422H118M105 450H118M105 478H118M105 506H118M91 534H98M91 562H98M91 590H98M105 619H118M105 647H118"/>
                </g>
                <g id="treeNodes"></g>
            </svg>

            <!-- Specification tree -->
            <div id="tree" class="absolute left-0 top-[1px] w-[260px] flex flex-col text-[13px] text-white"></div>
        </div>

        <!-- Workbench toolbar -->
        <div id="rightBar" class="w-[34px] shrink-0 flex flex-col border-l-4 border-[#eeeef8] bg-linear-to-r from-[#d8d7ec] to-[#cdcce4] pl-[2px]"></div>
    </div>

    <!-- Bottom toolbar -->
    <div class="h-[38px] shrink-0 flex items-center border-t-4 border-b border-t-[#f6f6fc] border-b-[#4c4c58] bg-linear-to-b from-[#e4e3f2] via-[#d3d2e6] to-[#b9b8cc]">
        <div id="bottomBar" class="flex items-center"></div>
        <svg class="ml-auto mr-[9px] mb-[16px] w-[10px] h-[9px]" fill="none" stroke="#8a889c"><path d="M1 1L4.500 4.500L1 8M5 1L8.500 4.500L5 8"/></svg>
        <svg class="w-[50px] h-[37px] -mt-[4px] mr-[1px] bg-[#dcdbee]/70" viewBox="1312 666 50 37">
            <path d="M1328 670C1334 667 1338 669 1337 672C1336 675 1332 677 1330 677" fill="none" stroke="#d8402c" stroke-width="2"/>
            <path d="M1336 675C1335 679 1341 682 1340 686C1338 690 1334 689 1332 688" fill="none" stroke="#f0a030" stroke-width="2.500"/>
            <path d="M1324 680C1331 677 1334 681 1330 686C1327 690 1323 691 1320 691L1325 682" fill="none" stroke="#1c2a78" stroke-width="2"/>
            <text x="1327" y="697" class="text-[8.500px] font-bold italic fill-[#1c2a6c] font-['Liberation_Sans']" textLength="31">CATIA</text>
        </svg>
    </div>

    <!-- Status bar -->
    <div class="h-[24px] shrink-0 flex items-center bg-[#d0cfe6] pl-[3px] text-[12px] tracking-[-0.33px]">
        <span>Select an object or a command</span>
        <div class="ml-auto w-[300px] h-[20px] bg-white border border-[#6c6c7c]"></div>
        <svg class="w-[32px] h-[20px] ml-[1px] border border-t-white border-l-white border-[#9a98ac]" fill="none" stroke="#8c8a9c"><path d="M10.500 6.500H17.500V12.500H10.500zM19 14.500H22V7"/></svg>
        <svg class="w-[30px] h-[20px] ml-[1px] border border-t-white border-l-white border-[#9a98ac]" fill="none" stroke="#8c8a9c"><circle cx="16" cy="9" r="5"/><circle cx="16" cy="9" r="2"/><path d="M20 14.500H23V5"/></svg>
    </div>

    <!-- Windows taskbar -->
    <div class="h-[36px] shrink-0 flex items-center bg-linear-to-r from-[#34322a] from-25% via-[#483c34] via-70% to-[#3f3f41] to-85% text-white">
        <div class="w-[48px] h-full bg-[#424242] flex items-center justify-center pt-[3px]">
            <svg class="w-[16px] h-[16px]" fill="#fff"><path d="M0 2.500L7 1.500V7.500H0zM8 1.300L16 0V7.500H8zM0 8.500H7V14.500L0 13.500zM8 8.500H16V16L8 14.700z"/></svg>
        </div>
        <div class="w-[288px] h-full bg-[#f1f1f1] flex items-center text-[#3c3c3c] text-[15px] border-t border-[#c8c8c8] pt-[3px]">
            <svg class="w-[18px] h-[18px] ml-[11px]" fill="none" stroke="#222" stroke-width="1.400"><circle cx="11" cy="6.500" r="5.300"/><path d="M7.200 10.500L1 17"/></svg>
            <span class="ml-[11px] tracking-[-0.52px]">Type here to search</span>
        </div>
        <div class="w-[48px] flex justify-center pt-[3px]"><svg class="w-[18px] h-[18px]" fill="none" stroke="#fff" stroke-width="1.300"><path d="M2 1V4H12V1M2 17V14H12V17M2 7H12V11H2zM16 1V4M16 8V17M15 6H17"/></svg></div>
        <div class="w-[53px] flex justify-center pt-[3px]"><svg class="w-[26px] h-[26px]" viewBox="0 0 26 26"><circle cx="13" cy="13" r="12" fill="url(#edgeG)"/><path d="M2 9C6 -2 24 -1 25 12C25 18 16 18 15 15C18 11 14 7 9 8C6 8 3 10 2 13z" fill="#3fcf9a"/><path d="M1 12C3 5 9 2 15 6C9 6 3 8 1 15z" fill="#28b8d8"/><path d="M9 13C8 19 13 23 20 22C15 25 5 24 3 16C2 11 6 9 10 9C14 9 17 13 15 15C13 14 10 11 9 13z" fill="#0c5cb0"/><path d="M15 15C17 18 22 18 25 14L23 19C18 21 12 20 11 16z" fill="#34322a"/></svg></div>
        <div class="w-[46px] flex justify-center pt-[3px]"><svg class="w-[22px] h-[20px]"><path d="M0 1H8L10 4H22V19H0z" fill="#e8b030"/><path d="M0 5H22V19H0z" fill="#ffd766"/><path d="M4 11H18V19H14V15H8V19H4z" fill="#3f88d8"/></svg></div>
        <div class="w-[50px] flex justify-center pt-px"><svg class="w-[24px] h-[24px]"><path d="M7 5V1H17V5" fill="none" stroke="#38a0e0" stroke-width="1.600"/><rect x="1" y="4" width="22" height="19" rx="2" fill="#f8f8f8"/><path d="M7 8H11.500V12.500H7z" fill="#e84a28"/><path d="M12.500 8H17V12.500H12.500z" fill="#6ab82c"/><path d="M7 13.500H11.500V18H7z" fill="#2898e0"/><path d="M12.500 13.500H17V18H12.500z" fill="#f8b820"/></svg></div>
        <div class="w-[49px] flex justify-center pt-[3px]"><svg class="w-[24px] h-[22px]"><path d="M0 8L12 0L24 8V21H0z" fill="#1660a8"/><path d="M2 7H22V15H2z" fill="#f4f8fc"/><path d="M0 8L12 15L24 8V21H0z" fill="#2c98e4"/></svg></div>
        <div class="w-[50px] flex justify-center"><svg class="w-[24px] h-[24px]"><path d="M12 1C14 3 15 5 18 5L19 2C23 7 24 11 23 15C20 24 7 26 2 18C-1 12 1 7 4 4L6 7C8 6 11 5 12 1z" fill="#ff7a28"/><path d="M14 1C17 3 20 5 21 9C22 14 20 18 15 20C19 16 19 10 14 8C12 6 13 3 14 1z" fill="#ffd23c"/><path d="M3 8C1 15 5 22 12 22C6 20 4 14 7 9z" fill="#e8285c"/><circle cx="12" cy="13" r="4.500" fill="#8a48e0"/></svg></div>
        <div class="w-[48px] h-full bg-[#585b50] flex items-center justify-center pt-[3px]"><svg class="w-[24px] h-[24px] border border-white"><use href="#app"/></svg></div>
        <div class="w-[50px] flex justify-center pt-[3px]"><svg class="w-[24px] h-[24px]" viewBox="-12 -12 24 24"><circle r="12" fill="#34a853"/><path d="M0 0L-10.400 -6A12 12 0 0 1 10.400 -6z" fill="#ea4335"/><path d="M-10.400 -6A12 12 0 0 1 10.400 -6H0L-5 3z" fill="#ea4335"/><path d="M10.400 -6A12 12 0 0 1 0 12L5 3L0 -6z" fill="#fbbc05"/><circle r="5.800" fill="#fff"/><circle r="4.500" fill="#4285f4"/></svg></div>
        <svg class="ml-auto mt-[3px] w-[120px] h-[24px] shrink-0" fill="none" stroke="#fff" stroke-width="1.200">
            <path d="M4 15L9.500 9.500L15 15"/>
            <path d="M29 17C29 10 34 6 40 5.500M32 17C32 12 36 9 40 8.500M35 17.500C35 14 37 12 40 11.500M38 17.500L40 15" /><circle cx="38.500" cy="16.500" r="1"/>
            <rect x="53.500" y="8.500" width="7" height="8" rx="1.500"/><path d="M60.500 11L63 9.500V15.500L60.500 14M54 5C57 3.500 60 3.500 62 5M54 20C57 21.500 60 21.500 62 20"/>
            <rect x="75.500" y="8.500" width="13" height="8"/><rect x="77.500" y="10.500" width="7" height="4" fill="#fff" stroke="none"/><path d="M90.500 11V14"/>
            <path d="M98 10.500H100L103.500 7V18L100 14.500H98zM106 10C107 12 107 13 106 15M108.500 8.500C110.500 11 110.500 14 108.500 16.500M111 7C114 10 114 15 111 18"/>
        </svg>
        <span class="w-[37px] shrink-0 text-[12px] tracking-[-0.3px] pl-[3px] pt-[2px]">ENG</span>
        <div class="w-[66px] shrink-0 flex flex-col items-center pt-[3px] text-[12px] leading-[18px] tracking-[-0.4px] whitespace-nowrap"><span>09:07</span><span class="-ml-1">10-07-2024</span></div>
        <svg class="w-[49px] h-[34px] shrink-0"><path d="M13 11H29V23H23L19 27V23H13z" fill="#fff"/><path d="M16 14.500H26M16 17.500H26M16 20H22" stroke="#444"/><circle cx="28" cy="25" r="8" fill="#444" stroke="#888"/><text x="25" y="30" class="text-[12px] fill-white">1</text></svg>
    </div>

    <!-- Floating toolbars -->
    <div id="palettes"></div>

    <!-- Screen recorder widget -->
    <div class="absolute left-[1232px] top-[642px] w-[26px] h-[122px] rounded-t-[3px] bg-[#1b1b1b] flex flex-col items-center">
        <svg class="w-[26px] h-[122px]" fill="#fff">
            <ellipse cx="8" cy="8" rx="4" ry="3.200" transform="rotate(-40 8 8)"/><circle cx="8" cy="8" r="1.400" fill="#1b1b1b"/><path d="M14 7.500H16M17 7.500H19M20 7.500H22" stroke="#fff" stroke-width="1.600"/>
            <path d="M3 22H8L10 19H16L18 22H22V35H3z"/><circle cx="12.500" cy="28" r="3.500" fill="none" stroke="#1b1b1b" stroke-width="1.600"/>
            <path d="M3 48H16V52L22 48V61L16 57V61H3z"/>
            <path d="M3 74H18V76H5V86H3z"/><path d="M6 77H22V90H6z"/>
            <circle cx="12.500" cy="108" r="6.800" fill="none" stroke="#fff" stroke-width="4" stroke-dasharray="4 3.100"/><circle cx="12.500" cy="108" r="4.800" fill="none" stroke="#fff" stroke-width="3.800"/>
        </svg>
    </div>

    <script>
        // [label, label x, icon, selected]
        const treeItems = [
            ["Product1", 44, "product"], ["Part1 (Part1.1)", 64, "part"], ["Part1", 84, "part2", "sel"],
            ["xy plane", 104, "plane"], ["yz plane", 104, "plane"], ["zx plane", 104, "plane"],
            ["PartBody", 104, "body"], ["Sketch.1", 124, "sketch"], ["AbsoluteAxis", 144, "axis"],
            ["Point.1", 124, "point"], ["Cylinder.1", 124, "cylT"],
            ["X", 144, "param"], ["Y", 144, "param"], ["Z", 144, "param"],
            ["Radius", 144, "param"], ["Length1", 144, "param"], ["Length2", 144, "param"],
            ["Point.2", 124, "point"], ["Helix.1", 124, "helix"], ["Sweep.1", 124, "sweep"],
            ["Length1", 144, "param"], ["Length2", 144, "param"], ["", 144, "param"]
        ];

        document.getElementById("tree").innerHTML = treeItems.map(([label, x, icon, sel]) => `
            <div class="h-[28.1px] shrink-0 flex items-center" style="margin-left:${x - 47}px">
                <svg class="w-7 h-7 shrink-0"><use href="#${icon}"/></svg>
                <span class="${sel ? "bg-[#0a6cf5] border-t-2 border-l-2 border-white leading-[18px]" : "bg-[#333366] pl-[2px] leading-[20px]"} h-[21px] ${label ? "" : "w-[36px]"} pr-[1px] rounded-[2px] tracking-[0.02px] whitespace-nowrap">${label}</span>
            </div>`).join("");

        // Expand / collapse knobs: x, y, collapsed
        const knobs = [[26, 85], [46, 113], [66, 225], [86, 253], [106, 281, 1], [86, 310, 1], [86, 338], [86, 534, 1], [86, 562, 1], [86, 590]];
        document.getElementById("treeNodes").innerHTML = knobs.map(([x, y, plus]) => `
            <circle cx="${x}" cy="${y}" r="5.5" fill="#9a9a9a" stroke="#55555c"/>
            <path d="M${x - 5} ${y}H${x + 5}${plus ? `M${x} ${y - 5}V${y + 5}` : ""}" stroke="#000" stroke-width="3"/>`).join("");

        // Half-width cells of the watermark are 28.8px wide
        const mark = [..."莫西网"].map((c, i) => [c, 407 + i * 56.5, 53])
            .concat([..."www.3dmox.com"].map((c, i) => [c, 581 + i * 28.8, "wm".includes(c) ? 27 : 0]));
        document.getElementById("watermark").innerHTML = mark.map(([c, x, w]) =>
            `<text x="${x}" y="400" ${w ? `textLength="${w}" lengthAdjust="spacingAndGlyphs"` : ""}>${c}</text>`).join("");

        // "+" marks a button with a dropdown, "<" a narrow button, "|" a group handle
        const drop = `<svg class="absolute right-0 bottom-0 w-[8px] h-[5px]"><path d="M0 0H8L4 4.500z"/></svg>`;

        const bottomItems = "|13 new open save print cut copy paste undo+ redo+ help |19 fx< bubble< chain< table+ diagram lock+ rules |19 fly fit pan rotate zin zout normal multi cube+ shade+ hide swap |19 catalog |18 measure caliper weight |20 camera |19 update manual axsys dims box+ stack stack+";
        const handle = {
            "|13": "w-[13px] pl-[5px]", "|19": "w-[19px] pl-[11px]", "|20": "w-[20px] pl-[12px]", "|18": "w-[18px] pl-[11px]"
        };
        document.getElementById("bottomBar").innerHTML = bottomItems.split(" ").map(name => {
            if (name[0] === "|") return `<div class="${handle[name]} shrink-0 h-[28px] -mt-1"><div class="w-[2px] h-[17px] mt-[2px] bg-white border-r border-[#9896a8]"></div></div>`;
            const dd = name.endsWith("+");
            const width = dd ? "w-[30px]" : name.endsWith("<") ? "w-[26px]" : "w-7";
            return `<div class="relative h-7 shrink-0 ${width}"><svg class="w-7 h-7 max-w-none"><use href="#${name.replace(/[+<]/, "")}"/></svg>${dd ? drop : ""}</div>`;
        }).join("");

        const cell = name => {
            const dd = name.endsWith("+");
            return `<div class="relative w-7 shrink-0 ${dd ? "h-[30px]" : "h-7"}"><svg class="w-7 h-7"><use href="#${name.replace("+", "")}"/></svg>${dd ? drop : ""}</div>`;
        };
        const grip = h => `<div class="shrink-0 ${h} flex items-center"><div class="w-[16px] h-[2px] bg-white border-b border-[#9896a8]"></div></div>`;
        const rule = h => `<div class="shrink-0 ${h} -ml-1 border-t border-white"></div>`;
        document.getElementById("rightBar").innerHTML = [
            grip("h-[11px]"), cell("cog"), grip("h-[21px]"),
            cell("gray1"), cell("gray2"), cell("gray1"), cell("gray2"), grip("h-[21px]"),
            cell("arrow+"), grip("h-[14px]"), cell("sketcher+"), grip("h-[18px]"),
            cell("trans+"), rule("h-[7px]"), cell("mirror"), cell("pattern+"), rule("h-[8px]"),
            cell("scale+"), grip("h-[17px]"), cell("dot"), cell("line"), cell("plane")
        ].join("");

        // Floating palettes: position, title, buttons
        const palettes = [
            ["left-[1164px] top-[194px] w-[36px]", "A", "abc+ tag+ stamp"],
            ["left-[1276px] top-[189px] w-[36px]", "S", "pad+ pocket+ shaft groove hole rib slot stiff+ loft rloft"],
            ["left-[1208px] top-[250px] w-[36px]", "D", "fillet+ chamfer draft+ shell thick target remove+"],
            ["left-[1152px] top-[339px] w-[36px]", "S", "surf+"],
            ["left-[1129px] top-[470px] w-[34px]", "P", "p1 p2 p3"],
            ["left-[1211px] top-[512px] w-[34px]", "C", "consG cons"]
        ];
        document.getElementById("palettes").innerHTML = palettes.map(([box, title, icons]) => `
            <div class="absolute ${box} bg-linear-to-r from-[#e4e3f2] via-[#d2d1e6] to-[#bcbbd0] shadow-[2px_3px_7px_rgba(0,0,0,0.45)]">
                <div class="h-[30px] bg-white flex items-center pl-[8px] text-[12px] overflow-hidden">
                    <span class="grow w-0 overflow-hidden">${title}</span>
                    <span class="mr-[1px] mt-[3px] w-[19px] h-[19px] shrink-0 bg-[#c75050] text-white text-[11px] leading-[17px] font-bold text-center">x</span>
                </div>
                <div class="h-[13px] pt-[4px] pl-[2px]"><div class="w-[17px] h-[3px] bg-white border-b border-[#a9a8bc]"></div></div>
                <div class="flex flex-col items-end pr-[2px]">${icons.split(" ").map(cell).join("")}</div>
            </div>`).join("");
    </script>
</body>
</html>
